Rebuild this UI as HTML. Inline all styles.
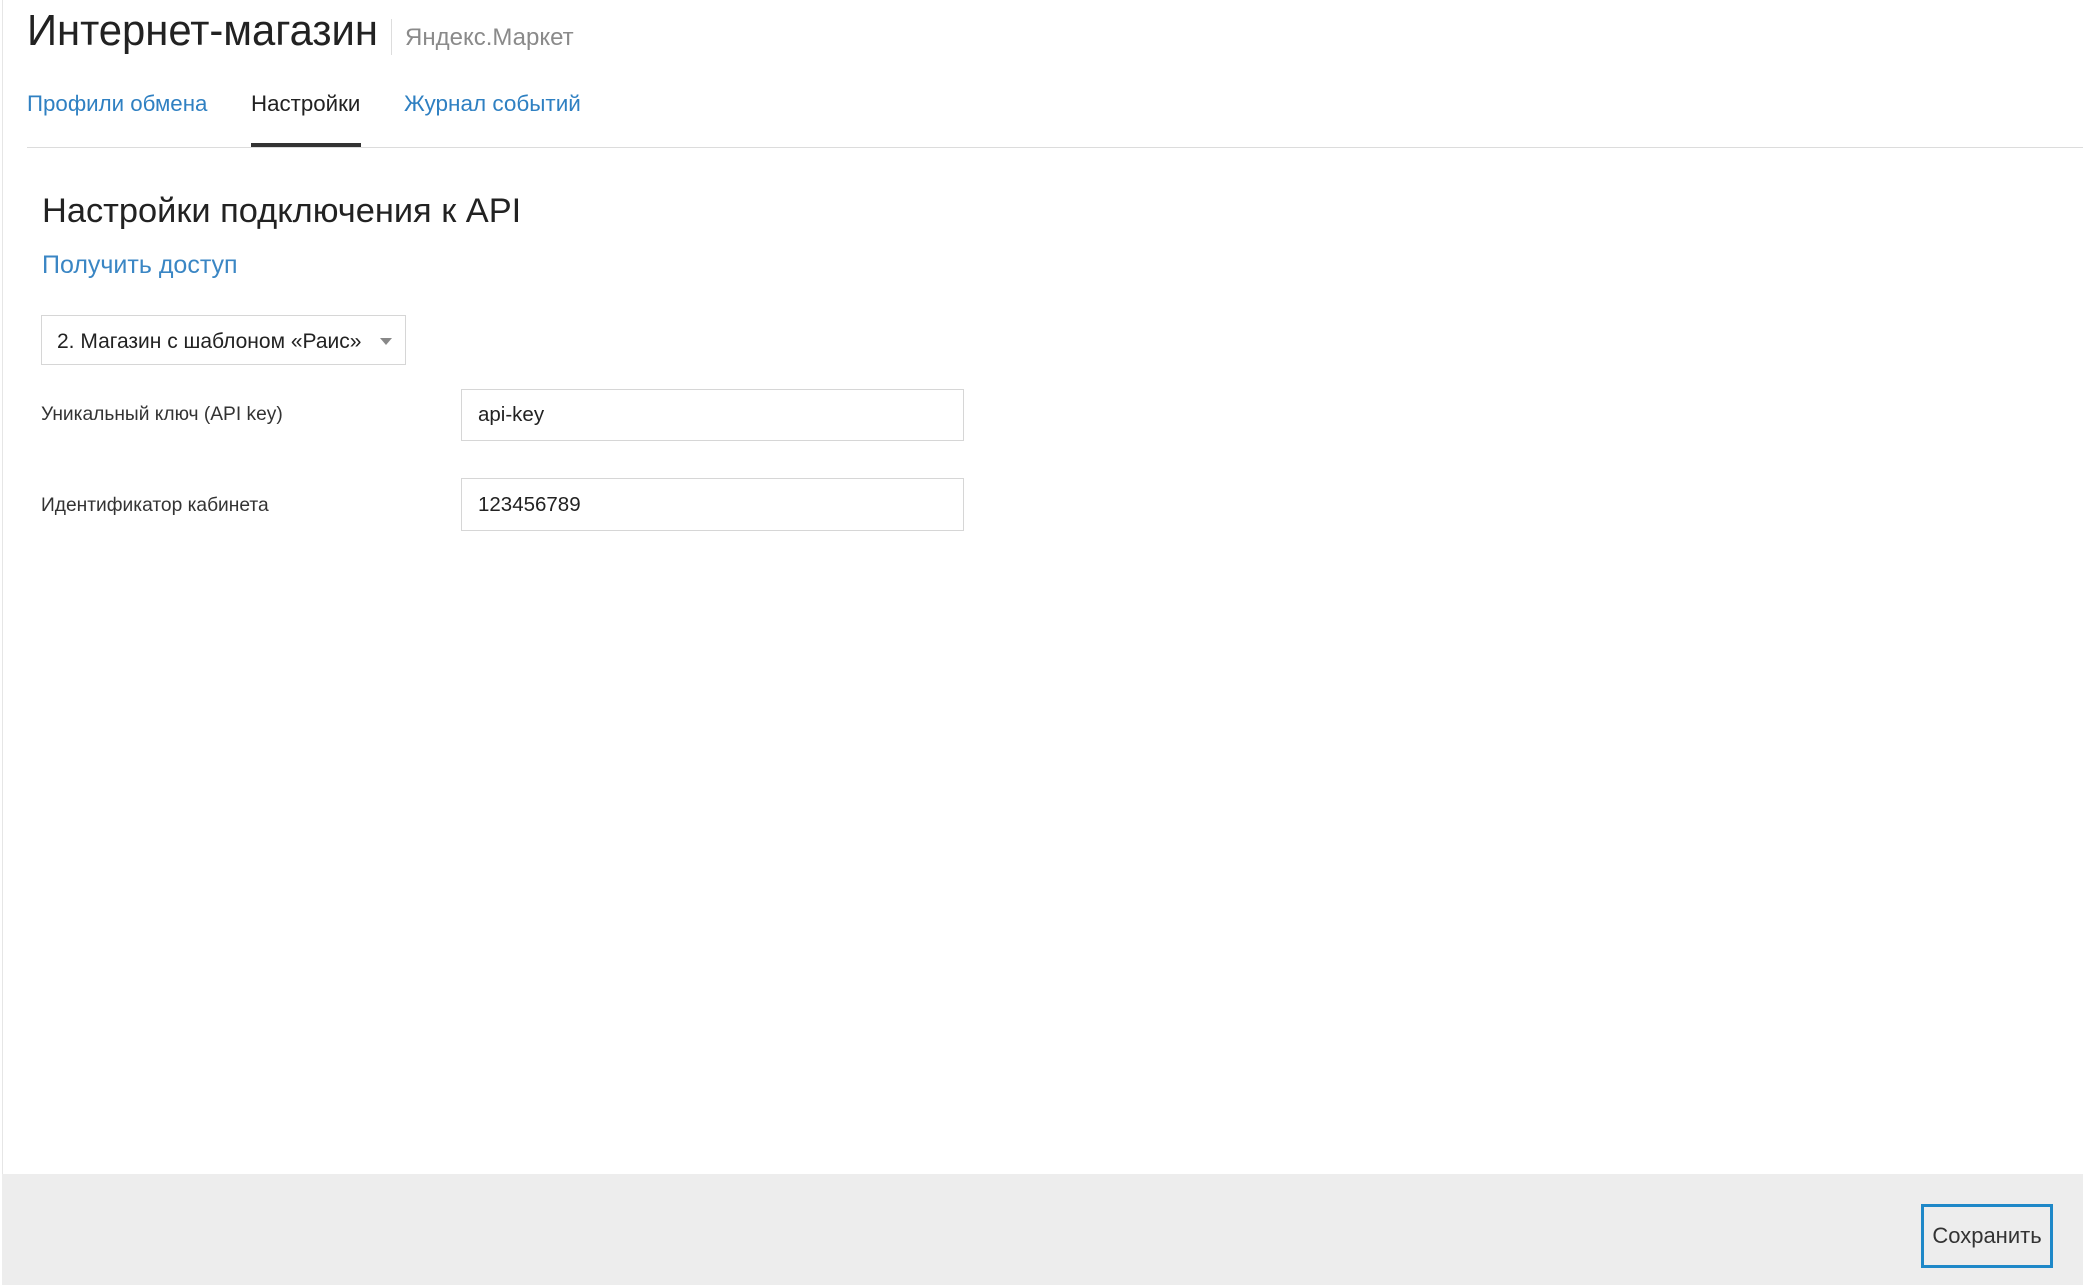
<!DOCTYPE html>
<html><head><meta charset="utf-8"><style>
html,body{margin:0;padding:0;width:2083px;height:1285px;overflow:hidden;background:#fff;position:relative;font-family:"Liberation Sans",Arial,sans-serif;color:#333}
.a{position:absolute;white-space:nowrap;line-height:1}
.sx{display:inline-block;transform-origin:left center}
</style></head><body>
<div style="position:absolute;left:2px;top:0;width:1px;height:1285px;background:#e6e6e6"></div>
<div class="a" style="left:27px;top:9px;font-size:44px;color:#222"><span class="sx" style="transform:scaleX(0.95)">Интернет-магазин</span></div>
<div style="position:absolute;left:391px;top:19px;width:1px;height:36px;background:#ddd"></div>
<div class="a" style="left:405px;top:26px;font-size:24px;color:#8a8a8a">Яндекс.Маркет</div>
<div class="a" style="left:27px;top:93px;font-size:22.3px;color:#2f80c2">Профили обмена</div>
<div class="a" style="left:251px;top:93px;font-size:22.3px;color:#222">Настройки</div>
<div class="a" style="left:404px;top:93px;font-size:22.5px;color:#2f80c2">Журнал событий</div>
<div style="position:absolute;left:251px;top:143px;width:110px;height:4px;background:#333"></div>
<div style="position:absolute;left:27px;top:147px;width:2056px;height:1px;background:#dcdcdc"></div>
<div class="a" style="left:42px;top:194px;font-size:34.4px;color:#222">Настройки подключения к API</div>
<div class="a" style="left:42px;top:253px;font-size:25px;color:#3a86c4">Получить доступ</div>
<div style="position:absolute;left:41px;top:315px;width:363px;height:48px;border:1px solid #d6d6d6"></div>
<div class="a" style="left:57px;top:331px;font-size:21px;color:#222">2. Магазин с шаблоном «Раис»</div>
<div style="position:absolute;left:380px;top:338px;width:0;height:0;border-left:6px solid transparent;border-right:6px solid transparent;border-top:7px solid #888"></div>
<div class="a" style="left:41px;top:405px;font-size:19.2px;color:#333">Уникальный ключ (API key)</div>
<div style="position:absolute;left:461px;top:389px;width:501px;height:50px;border:1px solid #d6d6d6"></div>
<div class="a" style="left:478px;top:405px;font-size:20.5px;color:#222">api-key</div>
<div class="a" style="left:41px;top:496px;font-size:19.2px;color:#333">Идентификатор кабинета</div>
<div style="position:absolute;left:461px;top:478px;width:501px;height:51px;border:1px solid #d6d6d6"></div>
<div class="a" style="left:478px;top:495px;font-size:20.5px;color:#222">123456789</div>
<div style="position:absolute;left:2px;top:1174px;width:2081px;height:111px;background:#ededed"></div>
<div style="position:absolute;left:1921px;top:1204px;width:126px;height:58px;border:3px solid #1e88c8;display:flex;align-items:center;justify-content:center;font-size:22px;color:#333">Сохранить</div>
</body></html>
